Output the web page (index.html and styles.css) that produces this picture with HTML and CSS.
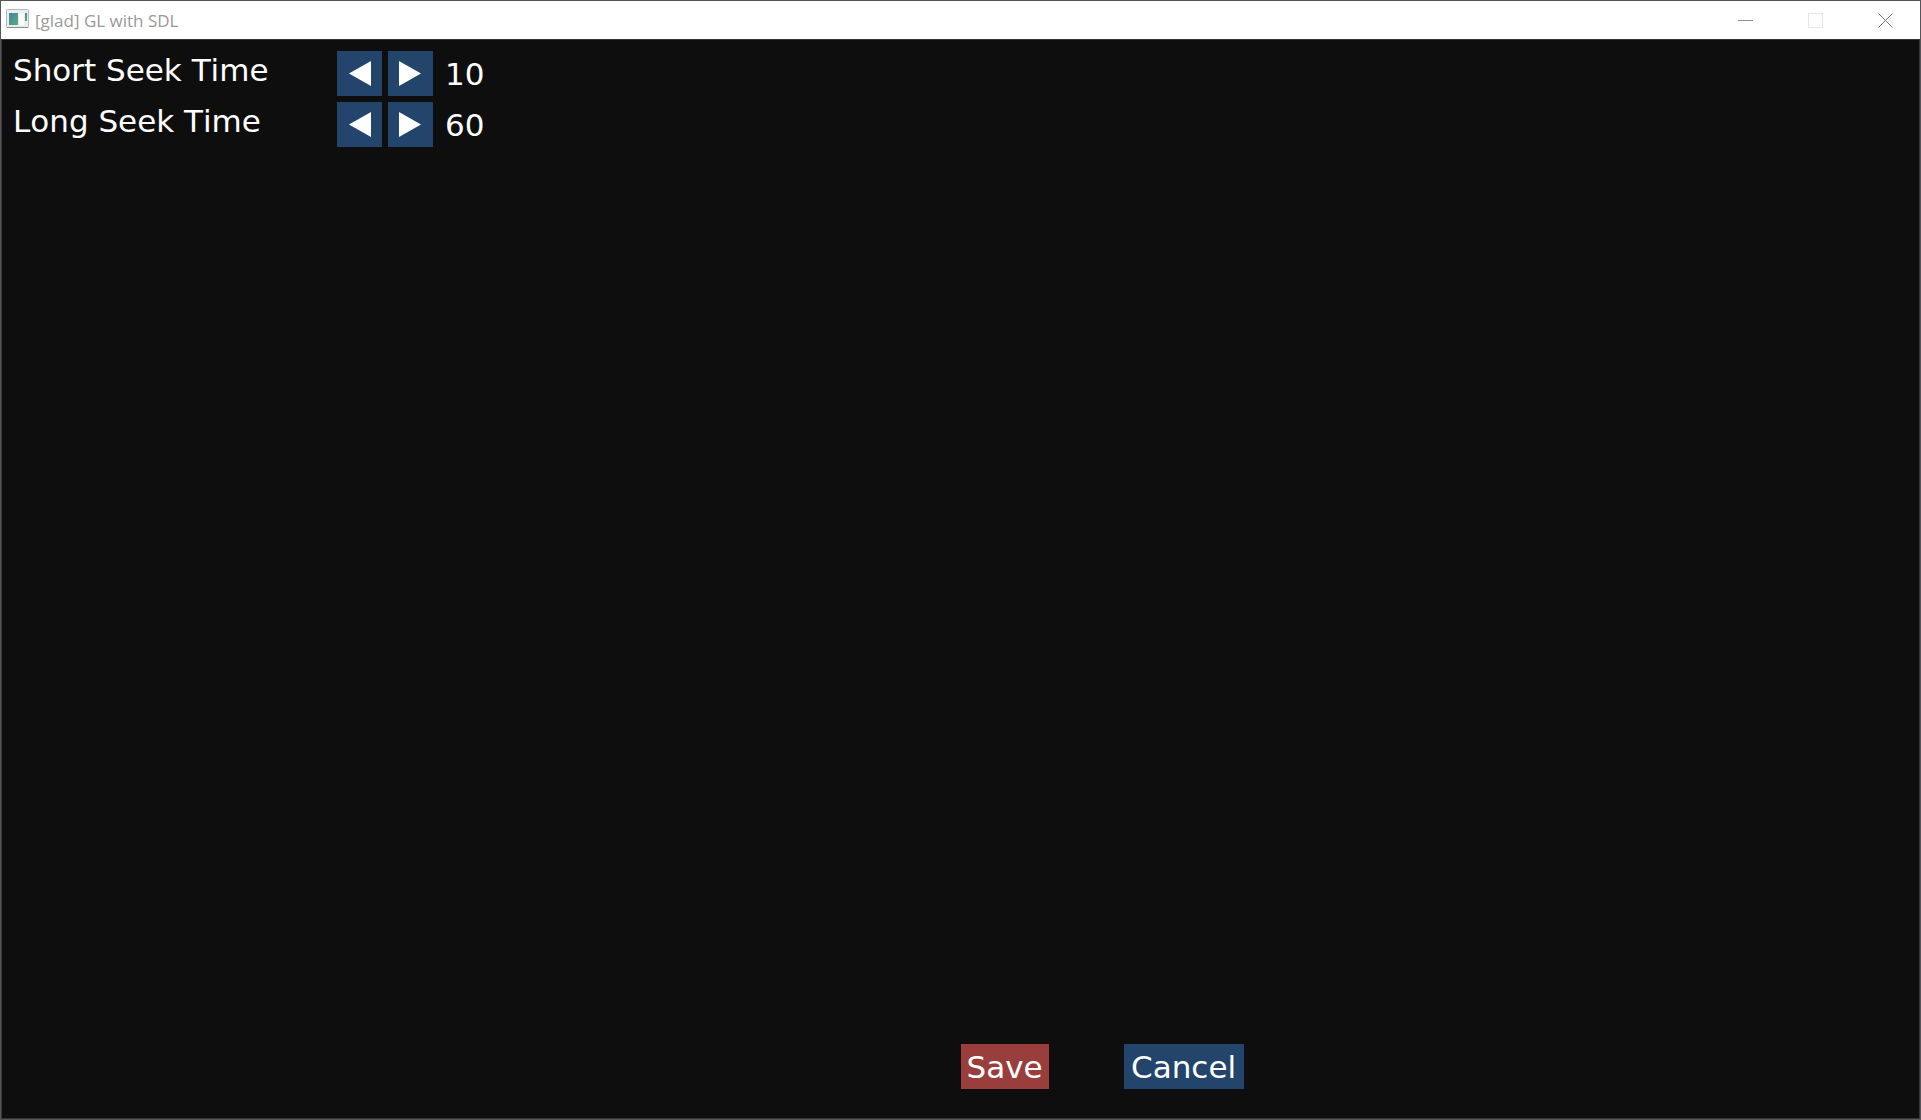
FILE: index.html
```html
<!DOCTYPE html>
<html lang="en">
<head>
<meta charset="utf-8">
<title>[glad] GL with SDL</title>
<link rel="stylesheet" href="styles.css">
</head>
<body>
<div class="window">
  <header class="titlebar">
    <svg class="app-icon" width="23" height="19" viewBox="0 0 23 19" aria-hidden="true">
      <defs>
        <linearGradient id="pane" x1="0" y1="0" x2="1" y2="1">
          <stop offset="0" stop-color="#4a80b0"/>
          <stop offset="1" stop-color="#56b070"/>
        </linearGradient>
      </defs>
      <rect x=".5" y=".5" width="22" height="18" rx="1" fill="#eceeee" stroke="#b4b8bb"/>
      <path d="M1 18.500H22" stroke="#868b8f"/>
      <rect x="3" y="4" width="9" height="12" fill="url(#pane)"/>
      <rect x="13" y="4" width="5" height="12" fill="#fafafa"/>
      <rect x="19" y="4" width="2" height="8" fill="url(#pane)"/>
    </svg>
    <h1 class="title">[glad] GL with SDL</h1>
    <div class="window-controls">
      <button class="control" type="button" aria-label="Minimize">
        <svg width="15" height="15" viewBox="0 0 15 15"><path d="M0 7.500H15" stroke="#8f8f8f"/></svg>
      </button>
      <button class="control" type="button" aria-label="Maximize" disabled>
        <svg width="15" height="15" viewBox="0 0 15 15"><rect x=".5" y=".5" width="14" height="14" fill="none" stroke="#e6e6e6"/></svg>
      </button>
      <button class="control" type="button" aria-label="Close">
        <svg width="15" height="15" viewBox="0 0 15 15"><path d="M.5 .5L14.500 14.500M14.500 .5L.5 14.500" stroke="#757575"/></svg>
      </button>
    </div>
  </header>
  <main class="content">
    <div class="settings">
      <div class="setting" role="group" aria-labelledby="short-label">
        <label class="setting-label" id="short-label" for="short-value">Short Seek Time</label>
        <button class="step" type="button" aria-label="Decrease short seek time">
          <svg width="45" height="45" viewBox="0 0 45 45"><path d="M12 22.500L34 10V35Z" fill="#fff"/></svg>
        </button>
        <button class="step" type="button" aria-label="Increase short seek time">
          <svg width="45" height="45" viewBox="0 0 45 45"><path d="M33 22.500L11 10V35Z" fill="#fff"/></svg>
        </button>
        <output class="setting-value" id="short-value">10</output>
      </div>
      <div class="setting" role="group" aria-labelledby="long-label">
        <label class="setting-label" id="long-label" for="long-value">Long Seek Time</label>
        <button class="step" type="button" aria-label="Decrease long seek time">
          <svg width="45" height="45" viewBox="0 0 45 45"><path d="M12 22.500L34 10V35Z" fill="#fff"/></svg>
        </button>
        <button class="step" type="button" aria-label="Increase long seek time">
          <svg width="45" height="45" viewBox="0 0 45 45"><path d="M33 22.500L11 10V35Z" fill="#fff"/></svg>
        </button>
        <output class="setting-value" id="long-value">60</output>
      </div>
    </div>
    <div class="actions">
      <button class="action action-save" type="button">Save</button>
      <button class="action action-cancel" type="button">Cancel</button>
    </div>
  </main>
</div>
</body>
</html>
```
FILE: styles.css
```css
* {
  box-sizing: border-box;
}

body {
  margin: 0;
  background: #55555a;
}

button {
  margin: 0;
  padding: 0;
  border: 0;
  font: inherit;
  color: inherit;
}

svg {
  display: block;
}

.window {
  display: flex;
  flex-direction: column;
  min-height: 100vh;
  padding: 1px;
  font-family: "DejaVu Sans", sans-serif;
}

.titlebar {
  display: flex;
  align-items: center;
  height: 38px;
  padding-left: 5px;
  background: #fff;
}

.app-icon {
  flex: none;
  margin-bottom: 3px;
}

.title {
  flex: 1;
  margin: 2px 0 0 6px;
  font: 400 17px/24px "Open Sans", sans-serif;
  color: #999;
}

.window-controls {
  display: flex;
}

.control {
  display: grid;
  place-items: center;
  width: 70px;
  height: 38px;
  background: none;
}

.content {
  flex: 1;
  display: flex;
  flex-direction: column;
  justify-content: space-between;
  padding: 11px 11px 29px;
  border: 1px solid #35353b;
  background: #0e0e0e;
  color: #fff;
  font-size: 31px;
  font-kerning: none;
  line-height: 38px;
}

.settings {
  display: grid;
  gap: 6px;
}

.setting {
  display: flex;
  align-items: flex-start;
  gap: 6px;
}

.setting-label {
  width: 318px;
}

.step {
  width: 45px;
  height: 45px;
  background: #23446b;
}

.setting-value {
  padding: 4px 6px 3px;
}

.actions {
  display: flex;
  gap: 75px;
  margin-left: 50%;
}

.action {
  height: 45px;
  padding: 0 6px;
  background: #23446b;
}

.action-save {
  background: #993d3d;
}

.action-cancel {
  min-width: 120px;
}
```
